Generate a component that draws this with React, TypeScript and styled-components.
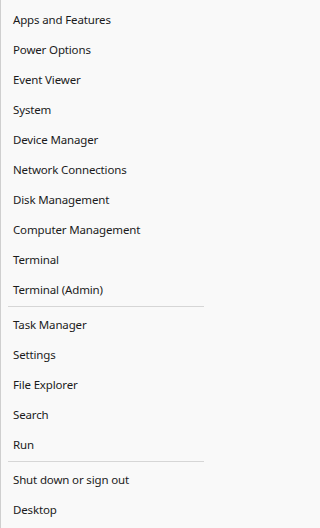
import React from 'react'
import styled, { createGlobalStyle } from 'styled-components'

const GlobalStyle = createGlobalStyle`
  html, body {
    margin: 0;
    padding: 0;
    background: #f9f9f9;
  }
  body {
    font-family: 'Noto Sans', 'Open Sans', sans-serif;
  }
`

const Menu = styled.div`
  width: 208px;
  height: 528px;
  box-sizing: border-box;
  background: #f9f9f9;
  border-left: 1px solid #cfcfcf;
  padding: 4px 0 4px 0;
  display: flex;
  flex-direction: column;
`

const Item = styled.div`
  height: 30px;
  display: flex;
  align-items: center;
  padding-left: 12px;
  font-size: 11.5px;
  letter-spacing: -0.15px;
  color: #1b1b1b;
  cursor: default;

  &:hover {
    background: #efefef;
  }
`

const Separator = styled.div`
  height: 1px;
  margin: 2px 4px 2px 7px;
  background: #d6d6d6;
`

const groups = [
  [
    'Apps and Features',
    'Power Options',
    'Event Viewer',
    'System',
    'Device Manager',
    'Network Connections',
    'Disk Management',
    'Computer Management',
    'Terminal',
    'Terminal (Admin)'
  ],
  ['Task Manager', 'Settings', 'File Explorer', 'Search', 'Run'],
  ['Shut down or sign out', 'Desktop']
]

export default function App() {
  return (
    <>
      <GlobalStyle />
      <Menu>
        {groups.map((group, i) => (
          <React.Fragment key={i}>
            {i > 0 && <Separator />}
            {group.map(label => (
              <Item key={label}>{label}</Item>
            ))}
          </React.Fragment>
        ))}
      </Menu>
    </>
  )
}
